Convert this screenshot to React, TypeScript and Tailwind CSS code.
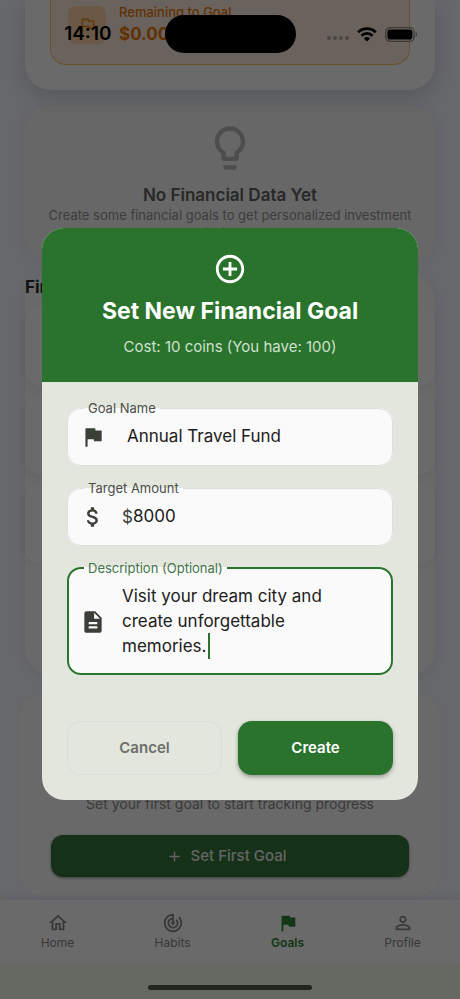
import React, { FC, ReactNode, useState } from 'react'
import {
  MdAdd,
  MdAddCircleOutline,
  MdAttachMoney,
  MdDescription,
  MdFlag,
  MdLightbulbOutline,
  MdOutlineFlag,
  MdOutlineHome,
  MdPersonOutline,
  MdTrackChanges,
} from 'react-icons/md'

const tabs = [
  { label: 'Home', Icon: MdOutlineHome },
  { label: 'Habits', Icon: MdTrackChanges },
  { label: 'Goals', Icon: MdFlag, active: true },
  { label: 'Profile', Icon: MdPersonOutline },
]

const StatusBar: FC = () => (
  <div className="absolute inset-x-0 top-0 z-20 grid grid-cols-[1fr_131px_1fr] items-center pt-[15px] text-black">
    <span className="pr-[53px] text-right text-[19px] leading-6 font-semibold">
      14:10
    </span>
    <div className="h-[38px] rounded-full bg-black" />
    <div className="flex items-center justify-end gap-2 pr-[42px]">
      <div className="mt-2 flex gap-[2px]">
        {[0, 1, 2, 3].map((i) => (
          <i key={i} className="size-1 rounded-full bg-[#4b4642]" />
        ))}
      </div>
      <svg width="20" height="15" viewBox="0 0 20 15" fill="none">
        <path d="M1.2 5.2a12.6 12.6 0 0 1 17.6 0" stroke="currentColor" strokeWidth="2.8" />
        <path d="M4.5 8.7a7.9 7.9 0 0 1 11 0" stroke="currentColor" strokeWidth="2.7" />
        <path d="M10 14.6 6.9 11.5a4.5 4.5 0 0 1 6.2 0z" fill="currentColor" />
      </svg>
      <svg width="33" height="15" viewBox="0 0 33 15" fill="none">
        <rect x="0.7" y="0.7" width="28.4" height="13.6" rx="4.3" stroke="#3c3834" strokeWidth="1.2" />
        <rect x="2.4" y="2.4" width="25" height="10.2" rx="2.8" fill="currentColor" />
        <path d="M30.6 5.3c1.8.6 1.8 3.8 0 4.4z" fill="#3c3834" />
      </svg>
    </div>
  </div>
)

interface FieldProps {
  id: string
  label: string
  icon: ReactNode
  focused?: boolean
  children: ReactNode
}

const Field: FC<FieldProps> = ({ id, label, icon, focused, children }) => (
  <fieldset
    className={`min-w-0 rounded-[14px] bg-[#fafafa] ${
      focused ? 'border-2 border-[#29752d]' : 'border border-[#dddfdd]'
    }`}
  >
    <legend
      className={`px-1 text-[13px] leading-4 ${
        focused ? 'ml-[15px] text-[#43744a]' : 'ml-4 text-[#4a4d48]'
      }`}
    >
      <label htmlFor={id}>{label}</label>
    </legend>
    <div
      className={`flex items-center pr-3 text-[#3a3f38] ${
        focused ? 'pt-2 pb-[14px] pl-[11px]' : 'pt-2 pb-[15px] pl-3'
      }`}
    >
      <span className="w-[42px] shrink-0">{icon}</span>
      {children}
    </div>
  </fieldset>
)

const GoalDialog: FC = () => {
  const [name, setName] = useState('Annual Travel Fund')
  const [amount, setAmount] = useState('8000')
  const [description, setDescription] = useState(
    'Visit your dream city and create unforgettable memories.'
  )

  return (
    <div
      role="dialog"
      aria-labelledby="dialog-title"
      className="w-full max-w-md overflow-hidden rounded-[22px] bg-[#e3e6dd]"
    >
      <div className="flex flex-col items-center bg-[#29732c] px-4 pt-6 pb-[23px] text-white">
        <MdAddCircleOutline size={34} />
        <h2 id="dialog-title" className="mt-[9px] text-[23px] leading-8 font-bold">
          Set New Financial Goal
        </h2>
        <p className="mt-2 text-[15px] leading-6 text-[#cfe0cf]">
          Cost: 10 coins (You have: 100)
        </p>
      </div>

      <form className="px-[25px] pt-[18px] pb-[25px]" onSubmit={(e) => e.preventDefault()}>
        <div className="flex flex-col gap-[14px]">
          <Field id="name" label="Goal Name" icon={<MdFlag size={26} />}>
            <input
              id="name"
              value={name}
              onChange={(e) => setName(e.target.value)}
              className="ml-[5px] h-6 w-full min-w-0 text-[17px] text-[#1d201c] outline-none"
            />
          </Field>
          <Field id="amount" label="Target Amount" icon={<MdAttachMoney size={26} />}>
            <span className="text-[17px] leading-6">$</span>
            <input
              id="amount"
              value={amount}
              onChange={(e) => setAmount(e.target.value)}
              className="h-6 w-full min-w-0 text-[17px] text-[#1d201c] outline-none"
            />
          </Field>
          <Field
            id="description"
            label="Description (Optional)"
            icon={<MdDescription size={26} />}
            focused
          >
            <div className="relative flex w-full">
              <textarea
                id="description"
                rows={3}
                value={description}
                onChange={(e) => setDescription(e.target.value)}
                className="w-full resize-none overflow-hidden pr-4 text-[17px] leading-[25px] text-[#1d201c] caret-transparent outline-none"
              />
              <i className="absolute bottom-0 left-[86px] h-[26px] w-[2px] bg-[#29732c]" />
            </div>
          </Field>
        </div>

        <div className="mt-[46px] grid grid-cols-2 gap-4 text-[15px] font-semibold">
          <button
            type="button"
            className="h-[54px] rounded-[14px] border border-[#dadddb] text-[#6c6f6b]"
          >
            Cancel
          </button>
          <button
            type="submit"
            className="h-[54px] rounded-[14px] bg-[#29732c] text-white shadow-[0_2px_4px_rgba(0,0,0,0.35)]"
          >
            Create
          </button>
        </div>
      </form>
    </div>
  )
}

export default function App() {
  return (
    <div className="relative flex min-h-screen flex-col overflow-hidden bg-[#f3f7fd] font-['Inter','Liberation_Sans',sans-serif]">
      <StatusBar />

      <main className="flex flex-1 flex-col pb-[3px]">
        <section className="z-[1] mx-[25px] rounded-b-[26px] bg-[#fdfdfd] px-[25px] pb-[25px] shadow-[0_6px_20px_rgba(50,55,70,0.2)]">
          <div className="flex gap-[13px] rounded-b-2xl border border-t-0 border-[#ffc06a] bg-[#fbeade] px-[17px] pt-[6px] pb-[18px]">
            <div className="flex size-[38px] items-center justify-center rounded-lg bg-[#fbd4a8] text-[#f08a24]">
              <MdOutlineFlag size={21} />
            </div>
            <div className="-mt-1 text-[#e87408]">
              <p className="text-[13px] leading-5 font-medium">Remaining to Goal</p>
              <p className="text-[17px] leading-6 font-bold">$0.00</p>
            </div>
          </div>
        </section>

        <section className="mx-[25px] mt-4 flex flex-col items-center rounded-3xl bg-[#f6f6f6] px-4 pt-4 pb-5 shadow-[0_0_14px_rgba(60,70,90,0.08)]">
          <MdLightbulbOutline size={52} className="text-[#b8b8b8]" />
          <h3 className="mt-[10px] text-[17px] leading-[22px] font-semibold text-[#606060]">
            No Financial Data Yet
          </h3>
          <p className="text-center text-[13px] leading-[18px] text-[#929292]">
            Create some financial goals to get personalized investment insights.
          </p>
        </section>

        <section className="mx-[25px] mt-3 rounded-[26px] bg-[#fbfbfb] pb-[111px] shadow-[0_2px_12px_rgba(60,70,90,0.1)]">
          <h3 className="pt-px text-[17px] leading-6 font-bold text-[#2b2b2b]">
            Financial Goals
          </h3>
          <div className="mt-[6px] flex flex-col gap-2">
            {['Savings', 'Budget', 'Invest'].map((key) => (
              <div
                key={key}
                className="h-[81px] rounded-2xl bg-[#fcfcfc] shadow-[0_2px_8px_rgba(60,60,70,0.07)]"
              />
            ))}
          </div>
        </section>

        <section className="mx-[18px] mt-[18px] rounded-3xl border border-[#eef0f3] bg-[#fafafa] px-8 pt-[100px] pb-[19px]">
          <p className="text-center text-[14px] leading-5 text-[#8a8a8a]">
            Set your first goal to start tracking progress
          </p>
          <button className="mt-[21px] flex h-[42px] w-full items-center justify-center gap-2 rounded-xl bg-[#32753a] pr-2 text-[15px] font-medium text-[#eee] shadow-[0_1px_3px_rgba(0,0,0,0.4)]">
            <MdAdd size={17} />
            Set First Goal
          </button>
        </section>
      </main>

      <nav className="grid grid-cols-4 bg-[#fdfdfd] pt-3 pb-[11px] shadow-[0_0_10px_rgba(0,0,0,0.1)]">
        {tabs.map(({ label, Icon, active }) => (
          <a
            key={label}
            href="#"
            className={`flex flex-col items-center text-[12px] leading-[18px] ${
              active ? 'font-semibold text-[#2f8033]' : 'text-[#868686]'
            }`}
          >
            <Icon size={22} />
            {label}
          </a>
        ))}
      </nav>
      <div className="flex h-9 items-end justify-center bg-[#f4f7ea] pb-[9px]">
        <div className="h-[5px] w-[164px] rounded-full bg-[#555850]" />
      </div>

      <div className="absolute inset-0 z-10 flex items-center justify-center bg-black/58 px-[42px] pt-[61px] pb-8">
        <GoalDialog />
      </div>
    </div>
  )
}
